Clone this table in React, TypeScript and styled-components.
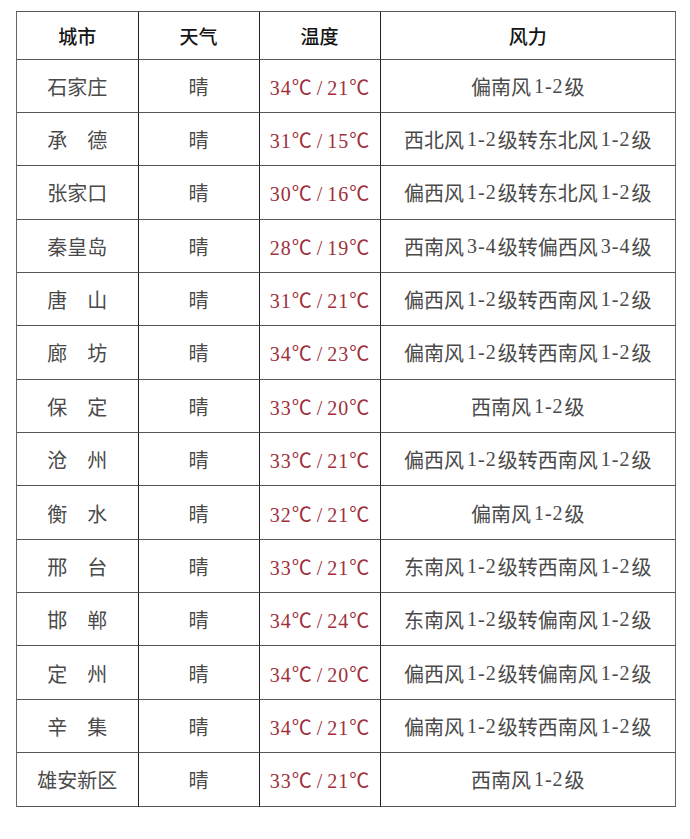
import React from "react";
import styled, { createGlobalStyle } from "styled-components";

const Global = createGlobalStyle`
  html, body { margin: 0; padding: 0; background: #ffffff; }
  body { width: 690px; height: 839px; overflow: hidden; }
`;

const Page = styled.div`
  padding: 11px 0 0 16px;
`;

const Grid = styled.div`
  width: 660px;
  box-sizing: border-box;
  display: grid;
  grid-template-columns: 121.5px 121px 121px 1fr;
  grid-template-rows: 47.5px repeat(14, 53.36px);
  border-top: 1.5px solid #555;
  border-left: 1.5px solid #666;
  font-family: "Liberation Serif", "Noto Sans CJK SC", serif;
`;

const Cell = styled.div<{ $head?: boolean; $red?: boolean; $lastCol?: boolean }>`
  box-sizing: border-box;
  display: flex;
  align-items: center;
  justify-content: center;
  border-right: 1.5px solid ${(p) => (p.$lastCol ? "#666" : "#222")};
  border-bottom: 1.5px solid #555;
  font-size: ${(p) => (p.$head ? "19px" : "20px")};
  color: ${(p) => (p.$head ? "#151515" : p.$red ? "#a0303a" : "#4a4a4a")};
  font-weight: ${(p) => (p.$head ? 500 : 400)};
  white-space: pre;
  padding-top: 1px;
`;

const Temp = styled.span`
  letter-spacing: 1px;
  margin-right: -1px;
`;

const Slash = styled.span`
  display: inline-block;
  margin: 0 4px;
`;

const Num = styled.span`
  letter-spacing: 1px;
  margin: 0 1px 0 3px;
`;

const rows: [string, string, string, string][] = [
  ["石家庄", "晴", "34℃/21℃", "偏南风1-2级"],
  ["承　德", "晴", "31℃/15℃", "西北风1-2级转东北风1-2级"],
  ["张家口", "晴", "30℃/16℃", "偏西风1-2级转东北风1-2级"],
  ["秦皇岛", "晴", "28℃/19℃", "西南风3-4级转偏西风3-4级"],
  ["唐　山", "晴", "31℃/21℃", "偏西风1-2级转西南风1-2级"],
  ["廊　坊", "晴", "34℃/23℃", "偏南风1-2级转西南风1-2级"],
  ["保　定", "晴", "33℃/20℃", "西南风1-2级"],
  ["沧　州", "晴", "33℃/21℃", "偏西风1-2级转西南风1-2级"],
  ["衡　水", "晴", "32℃/21℃", "偏南风1-2级"],
  ["邢　台", "晴", "33℃/21℃", "东南风1-2级转西南风1-2级"],
  ["邯　郸", "晴", "34℃/24℃", "东南风1-2级转偏南风1-2级"],
  ["定　州", "晴", "34℃/20℃", "偏西风1-2级转偏南风1-2级"],
  ["辛　集", "晴", "34℃/21℃", "偏南风1-2级转西南风1-2级"],
  ["雄安新区", "晴", "33℃/21℃", "西南风1-2级"],
];

function TempText({ value }: { value: string }) {
  const [a, b] = value.split("/");
  return (
    <Temp>
      {a}
      <Slash>/</Slash>
      {b}
    </Temp>
  );
}

function WindText({ value }: { value: string }) {
  const parts = value.split(/(\d-\d)/);
  return (
    <>
      {parts.map((p, i) =>
        /\d-\d/.test(p) ? <Num key={i}>{p}</Num> : <React.Fragment key={i}>{p}</React.Fragment>
      )}
    </>
  );
}

export default function App() {
  return (
    <>
      <Global />
      <Page>
        <Grid>
          <Cell $head>城市</Cell>
          <Cell $head>天气</Cell>
          <Cell $head>温度</Cell>
          <Cell $head $lastCol>风力</Cell>
          {rows.map((r) => (
            <React.Fragment key={r[0]}>
              <Cell>{r[0]}</Cell>
              <Cell>{r[1]}</Cell>
              <Cell $red>
                <TempText value={r[2]} />
              </Cell>
              <Cell $lastCol>
                <WindText value={r[3]} />
              </Cell>
            </React.Fragment>
          ))}
        </Grid>
      </Page>
    </>
  );
}
